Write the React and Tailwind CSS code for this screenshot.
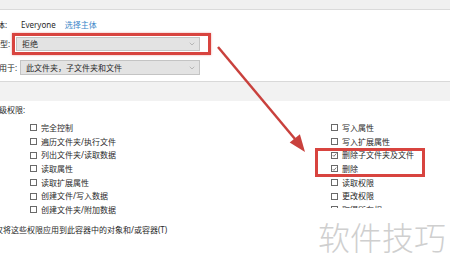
import React from 'react';
import { ChevronDown } from 'lucide-react';

const font = { fontFamily: '"Noto Sans", "Noto Sans CJK SC", sans-serif' };

const leftPerms = [
  { label: '完全控制' },
  { label: '遍历文件夹/执行文件' },
  { label: '列出文件夹/读取数据' },
  { label: '读取属性' },
  { label: '读取扩展属性' },
  { label: '创建文件/写入数据' },
  { label: '创建文件夹/附加数据' },
];

const rightPerms = [
  { label: '写入属性' },
  { label: '写入扩展属性' },
  { label: '删除子文件夹及文件', checked: true },
  { label: '删除', checked: true },
  { label: '读取权限' },
  { label: '更改权限' },
  { label: '取得所有权' },
];

const Check = ({ label, checked }) => (
  <div className="h-[13.7px] flex items-center gap-[4px] whitespace-nowrap">
    <span className="w-[7px] h-[7px] border border-[#6a6a6a] bg-white flex items-center justify-center shrink-0">
      {checked && (
        <svg width="6" height="6" viewBox="0 0 6 6">
          <path d="M0.8 3.1 L2.3 4.6 L5.2 1.2" fill="none" stroke="#555" strokeWidth="0.9" />
        </svg>
      )}
    </span>
    <span>{label}</span>
  </div>
);

const Select = ({ text, className }) => (
  <div className={`flex items-center justify-between bg-[#e3e3e3] border border-[#c4c4c4] pl-[5px] pr-[3px] ${className}`}>
    <span>{text}</span>
    <ChevronDown size={8} strokeWidth={1.5} className="text-[#8a8a8a]" />
  </div>
);

export default function App() {
  return (
    <div className="w-[450px] h-[275px] bg-white overflow-hidden relative text-[8px] text-[#2a2a2a] leading-none" style={font}>
      {/* top band */}
      <div className="h-[10px] bg-[#f0f0f0] border-b border-[#dadada]" />

      {/* principal */}
      <div className="mt-[8px] h-[14px] flex items-center whitespace-nowrap">
        <span className="-ml-[11px] w-[32px]">主体:</span>
        <span>Everyone</span>
        <span className="ml-[9px] text-[#3b87c8]">选择主体</span>
      </div>

      {/* type */}
      <div className="mt-[1px] h-[22px] flex items-center whitespace-nowrap">
        <span className="-ml-[8px] w-[20px]">类型:</span>
        <div className="w-[199px] h-[22px] border-[3px] border-[#d8443f] pl-[1px] pr-[8px] py-[1px] shadow-[0_0_2px_rgba(216,68,63,0.5)]">
          <Select text="拒绝" className="h-[14px]" />
        </div>
      </div>

      {/* applies to */}
      <div className="mt-[5px] h-[15px] flex items-center whitespace-nowrap">
        <span className="-ml-[9px] w-[29px]">应用于:</span>
        <Select text="此文件夹，子文件夹和文件" className="w-[180px] h-[15px]" />
      </div>

      {/* gray band */}
      <div className="mt-[6px] h-[20px] bg-[#f2f2f2] border-t border-[#d9d9d9]" />

      {/* advanced */}
      <div className="mt-[3px] h-[12px] flex items-center whitespace-nowrap">
        <span className="-ml-[9px]">高级权限:</span>
      </div>

      <div className="mt-[5px] flex">
        <div className="pl-[30px] w-[331px]">
          {leftPerms.map((p) => (
            <Check key={p.label} {...p} />
          ))}
        </div>
        <div className="relative h-[87px] overflow-hidden">
          {rightPerms.map((p) => (
            <Check key={p.label} {...p} />
          ))}
        </div>
      </div>

      {/* bottom */}
      <div className="mt-[7px] h-[12px] flex items-center whitespace-nowrap">
        <span className="-ml-[5px]">仅将这些权限应用到此容器中的对象和/或容器(T)</span>
      </div>

      {/* red box around delete permissions */}
      <div className="absolute left-[315px] top-[148px] w-[110px] h-[29px] border-[3px] border-[#d8443f]" />

      {/* arrow */}
      <svg className="absolute inset-0 pointer-events-none" width="450" height="275">
        <line x1="218" y1="47" x2="295" y2="139" stroke="#c9413d" strokeWidth="2.5" />
        <polygon points="305,152 289.7,142.4 299.9,134.2" fill="#c9413d" />
      </svg>

      {/* watermark */}
      <div className="absolute left-[318px] top-[222px] text-[32px] leading-none text-[#cfcfcf] font-light tracking-[0px] whitespace-nowrap">
        软件技巧
      </div>
    </div>
  );
}
